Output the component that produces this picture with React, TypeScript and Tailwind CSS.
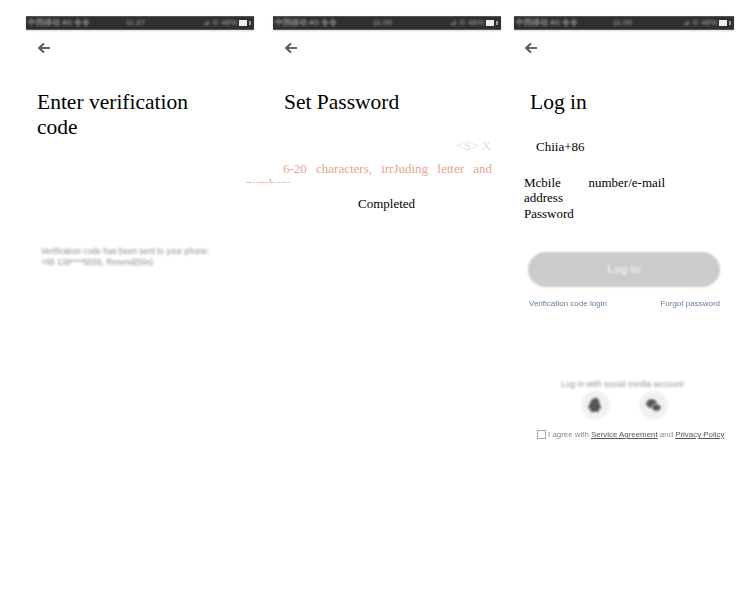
import React from "react";

const serif = "font-['Liberation_Serif','Times_New_Roman',serif]";
const sans = "font-['Liberation_Sans',Arial,sans-serif]";

function StatusBar({ left, time, right, gap }: { left: string; time: string; right: string; gap: string }) {
  return (
    <div className={`h-[14px] bg-[#2f2f2f] flex items-center justify-between pl-[2px] pr-[3px] border-y border-[#555] shadow-[0_1px_2px_rgba(0,0,0,0.15)] ${sans}`}>
      <span className="text-[7.500px] leading-none text-[#bdbdbd] blur-[0.8px] whitespace-nowrap">{left}</span>
      <span className={`text-[8px] leading-none text-[#aaaaaa] blur-[0.8px] ${gap}`}>{time}</span>
      <span className="flex items-center gap-[2px]">
        <span className="text-[8px] leading-none text-[#aaaaaa] blur-[0.8px] whitespace-nowrap">{right}</span>
        <span className="w-[8px] h-[6px] bg-[#eeeeee] blur-[0.4px]" />
        <span className="w-[2px] h-[4px] bg-[#999]" />
      </span>
    </div>
  );
}

function Back({ className }: { className: string }) {
  return (
    <div className={`w-[18px] h-[18px] mt-[9px] blur-[0.7px] ${className}`}>
      <svg viewBox="0 0 18 18" width="18" height="18" fill="none" stroke="#555" strokeWidth="1.8">
        <path d="M15 9H4" />
        <path d="M9 4.500L4 9l5 4.500" />
      </svg>
    </div>
  );
}

function Social({ children }: { children: React.ReactNode }) {
  return (
    <div className="w-[29px] h-[29px] rounded-full bg-[#f1f1f1] flex items-center justify-center blur-[0.9px]">
      {children}
    </div>
  );
}

export default function App() {
  return (
    <div className={`w-[755px] h-[593px] bg-white flex items-start overflow-hidden pt-[16px] text-black ${serif}`}>
      {/* Verification */}
      <section className="w-[228px] ml-[26px] shrink-0">
        <StatusBar left="中国移动 4G 令令" time="11:27" right="⊿ ⊙ 46%" gap="mr-[22px]" />
        <Back className="ml-[9px]" />
        <h1 className="mt-[33px] ml-[11px] w-[190px] text-[21.500px] leading-[25px] font-normal">Enter verification code</h1>
        <div className={`mt-[106px] ml-[15px] w-[180px] text-[8.200px] leading-[11px] text-[#8f8f8f] blur-[0.9px] ${sans}`}>
          <p className="whitespace-nowrap">Verification code has been sent to your phone:</p>
          <p className="whitespace-nowrap">+86 138****5555, Resend(59s)</p>
        </div>
      </section>

      {/* Password */}
      <section className="w-[228px] ml-[19px] shrink-0">
        <StatusBar left="中国移动 4G 令令" time="11:09" right="⊿ ⊙ 46%" gap="mr-[22px]" />
        <Back className="ml-[9px]" />
        <h1 className="mt-[33px] ml-[11px] text-[21.500px] leading-[25px] font-normal">Set Password</h1>
        <p className="mt-[23px] pr-[10px] text-right text-[13px] leading-[15px] text-[#dedede]">{"<S> X"}</p>
        <p className="mt-[8px] -ml-[27px] w-[246px] h-[22px] overflow-hidden indent-[37px] text-justify text-[13px] leading-[15px] text-[#e8a48c]">
          6-20 characters, irrJuding letter and numbers
        </p>
        <p className="mt-[13px] ml-[85px] text-[13px] leading-[15px]">Completed</p>
      </section>

      {/* Login */}
      <section className="w-[220px] ml-[13px] shrink-0">
        <StatusBar left="中国移动 4G 令令" time="11:09" right="⊿ ⊙ 46%" gap="mr-[16px]" />
        <Back className="ml-[8px]" />
        <h1 className="mt-[33px] ml-[16px] text-[21.500px] leading-[25px] font-normal">Log in</h1>
        <p className="mt-[24px] ml-[22px] text-[13px] leading-[15px]">Chiia+86</p>
        <div className="mt-[21px] ml-[10px] w-[141px] text-[13px] leading-[15px]">
          <p className="flex flex-wrap justify-between">
            <span>Mcbile</span>
            <span>number/e-mail</span>
            <span className="w-full">address</span>
          </p>
          <p className="mt-[1px]">Password</p>
        </div>
        <div className={`mt-[31px] ml-[14px] w-[192px] h-[35px] rounded-full bg-[#cbcbcb] flex items-center justify-center blur-[0.8px] ${sans}`}>
          <span className="text-[11px] font-bold text-[#eeeeee] blur-[0.3px]">Log in</span>
        </div>
        <div className={`mt-[11px] ml-[15px] w-[191px] flex justify-between text-[8px] leading-[11px] text-[#5f7f9f] blur-[0.7px] ${sans}`}>
          <span>Verification code login</span>
          <span>Forgot password</span>
        </div>
        <p className={`mt-[70px] ml-[47px] text-[8.500px] leading-[11px] text-[#969696] blur-[0.9px] whitespace-nowrap ${sans}`}>
          Log in with social media account
        </p>
        <div className="mt-[1px] ml-[67px] flex gap-[29px]">
          <Social>
            <svg viewBox="0 0 16 16" width="17" height="17" fill="#555">
              <path d="M8 1c2.400 0 3.600 1.900 3.600 4.100 0 1 .3 1.500.9 2.600.7 1.300 1.100 3 .5 3.400-.4.2-.9-.3-1.200-.8-.2 1-.7 1.800-1.300 2.300.8.3 1.400.7 1.200 1.100-.3.5-2.700.5-3.900.1-.5 0-.9 0-1.400 0-1.200.4-3.400.4-3.700-.1-.2-.4.4-.8 1.200-1.100-.6-.5-1.100-1.300-1.300-2.300-.3.5-.8 1-1.200.8-.6-.4-.2-2.100.5-3.400.6-1.100.9-1.600.9-2.600C4.400 2.900 5.600 1 8 1z" />
            </svg>
          </Social>
          <Social>
            <svg viewBox="0 0 16 16" width="17" height="17" fill="#555">
              <ellipse cx="6.200" cy="6.300" rx="5" ry="4.200" />
              <ellipse cx="10.800" cy="10" rx="4.300" ry="3.500" stroke="#f1f1f1" strokeWidth="0.8" />
            </svg>
          </Social>
        </div>
        <div className={`mt-[9px] ml-[23px] flex items-center gap-[2px] text-[7.900px] leading-[11px] text-[#8a8a8a] blur-[0.6px] whitespace-nowrap ${sans}`}>
          <span className="w-[9px] h-[9px] border border-[#aaa] shrink-0" />
          <span>
            I agree with <span className="text-[#555] underline">Service Agreement</span> and <span className="text-[#555] underline">Privacy Policy</span>
          </span>
        </div>
      </section>
    </div>
  );
}
